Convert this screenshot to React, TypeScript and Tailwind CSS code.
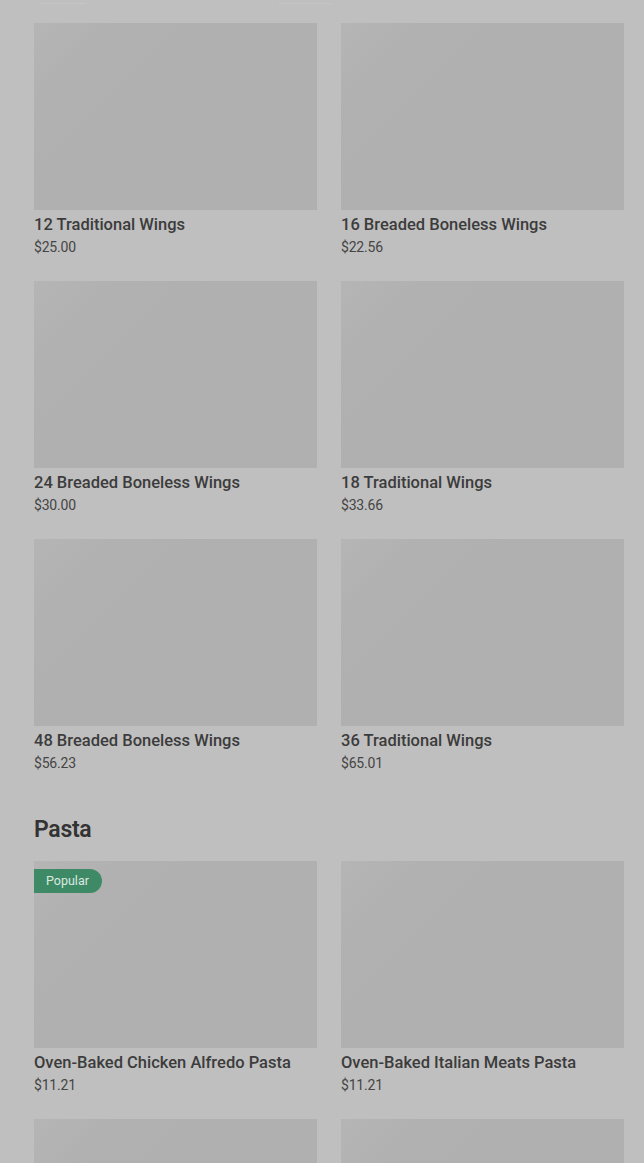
const wings = [
  { name: '12 Traditional Wings', price: '$25.00' },
  { name: '16 Breaded Boneless Wings', price: '$22.56' },
  { name: '24 Breaded Boneless Wings', price: '$30.00' },
  { name: '18 Traditional Wings', price: '$33.66' },
  { name: '48 Breaded Boneless Wings', price: '$56.23' },
  { name: '36 Traditional Wings', price: '$65.01' },
];

const pasta = [
  { name: 'Oven-Baked Chicken Alfredo Pasta', price: '$11.21', popular: true },
  { name: 'Oven-Baked Italian Meats Pasta', price: '$11.21' },
  { name: '', price: '' },
  { name: '', price: '' },
];

function Card({ item }: { item: { name: string; price: string; popular?: boolean } }) {
  return (
    <div className="flex flex-col">
      <div className="relative h-[187px] bg-[linear-gradient(135deg,#b5b5b5_0%,#b1b1b1_18%,#b0b0b0_40%)]">
        {item.popular && (
          <span className="absolute left-0 top-[8px] h-[24px] pl-[12px] pr-[13px] flex items-center rounded-r-full bg-[#3f8a66] text-[12.5px] text-[#dbe9e0]">
            Popular
          </span>
        )}
      </div>
      {item.name && (
        <>
          <div className="mt-[5px] text-[16.5px] leading-[20px] font-medium text-[#3c3c3c]">{item.name}</div>
          <div className="mt-[4px] text-[14px] leading-[16px] text-[#454545] tracking-[-0.2px]">{item.price}</div>
        </>
      )}
    </div>
  );
}

export default function App() {
  return (
    <main className="h-[1163px] overflow-hidden bg-[#bfbfbf] pl-[34px] pr-[20px] font-['Roboto',sans-serif]">
      <div className="flex gap-6 pt-[3px]">
        <div className="w-[283px]"><div className="ml-[6px] w-[46px] h-px bg-[#c6c6c6]" /></div>
        <div className="w-[283px]"><div className="ml-[-62px] w-[52px] h-px bg-[#c6c6c6]" /></div>
      </div>
      <div className="grid grid-cols-2 gap-x-6 gap-y-[26px] pt-[19px]">
        {wings.map((w) => <Card key={w.name} item={w} />)}
      </div>
      <h2 className="mt-[45px] text-[23px] leading-[28px] font-semibold text-[#333] tracking-[-0.3px]">Pasta</h2>
      <div className="grid grid-cols-2 gap-x-6 gap-y-[26px] mt-[17px]">
        {pasta.map((p, i) => <Card key={i} item={p} />)}
      </div>
    </main>
  );
}
